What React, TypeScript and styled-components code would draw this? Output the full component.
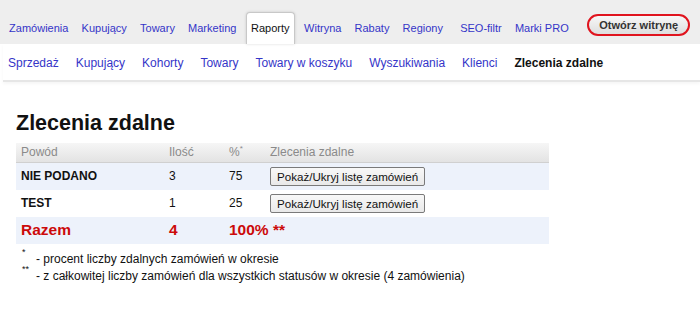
import styled, { createGlobalStyle } from "styled-components";

const GlobalStyle = createGlobalStyle`
  html, body {
    margin: 0;
    padding: 0;
    background: #ffffff;
    font-family: "Liberation Sans", Arial, sans-serif;
  }
`;

const TopBar = styled.div`
  height: 44px;
  box-sizing: border-box;
  background: #eeeeee;
  display: flex;
  align-items: flex-end;
  padding-left: 2.5px;
  white-space: nowrap;
`;

const TopItem = styled.a<{ $active?: boolean; $wide?: boolean }>`
  flex-shrink: 0;
  height: 32px;
  box-sizing: border-box;
  display: flex;
  align-items: center;
  padding: 0 ${(p) => (p.$active ? "4px" : "5.6px")} 2px;
  margin: 0 ${(p) => (p.$active ? "3px" : "0")};
  margin-left: ${(p) => (p.$wide ? "4px" : undefined)};
  font-size: 11px;
  color: ${(p) => (p.$active ? "#111" : "#3535c8")};
  background: ${(p) => (p.$active ? "#fff" : "transparent")};
  border: ${(p) => (p.$active ? "1px solid #c8c8c8" : "1px solid transparent")};
  border-bottom: none;
  border-radius: 4px 4px 0 0;
  box-shadow: ${(p) => (p.$active ? "0 0 3px rgba(0,0,0,0.15)" : "none")};
  cursor: pointer;
`;

const OpenButton = styled.button`
  flex-shrink: 0;
  align-self: center;
  margin: 5px 0 0 12px;
  height: 22px;
  padding: 0 10px;
  border: 2px solid #e0141e;
  border-radius: 11px;
  background: linear-gradient(#f7f7f7, #dedede);
  color: #333;
  font-family: "Liberation Sans", Arial, sans-serif;
  font-size: 11px;
  font-weight: bold;
  white-space: nowrap;
  cursor: pointer;
`;

const SubNav = styled.div`
  height: 38px;
  box-sizing: border-box;
  display: flex;
  align-items: center;
  gap: 17px;
  padding: 1px 0 0 5px;
  margin-left: 3px;
  white-space: nowrap;
  border-bottom: 2px solid #e6e6e6;
  box-shadow: 0 2px 3px rgba(0, 0, 0, 0.04);
`;

const SubItem = styled.a<{ $active?: boolean }>`
  flex-shrink: 0;
  font-size: 12px;
  color: ${(p) => (p.$active ? "#111" : "#3535c8")};
  font-weight: ${(p) => (p.$active ? "bold" : "normal")};
  cursor: pointer;
`;

const Main = styled.div`
  padding: 28px 16px 0 16px;
`;

const Title = styled.h1`
  margin: 0 0 7px 0;
  font-size: 21.5px;
  line-height: 26px;
  font-weight: bold;
  color: #111;
`;

const Table = styled.table`
  width: 533px;
  border-collapse: collapse;
  font-size: 12px;
  color: #111;
`;

const HeadCell = styled.th<{ $w?: number }>`
  text-align: left;
  font-weight: normal;
  color: #8a8a8a;
  height: 19px;
  padding: 0 5px;
  width: ${(p) => (p.$w ? `${p.$w}px` : "auto")};
  background: linear-gradient(#f6f6f6, #e3e3e3);
  border-bottom: 1px solid #d0d0d0;
  box-sizing: border-box;
`;

const Sup = styled.sup`
  font-size: 8px;
  vertical-align: 5px;
  line-height: 0;
`;

const Row = styled.tr<{ $shade?: boolean }>`
  background: ${(p) => (p.$shade ? "#edf2fb" : "#fff")};
`;

const Cell = styled.td<{ $bold?: boolean; $total?: boolean }>`
  height: 27px;
  padding: 0 5px;
  font-weight: ${(p) => (p.$bold || p.$total ? "bold" : "normal")};
  font-size: ${(p) => (p.$total ? "15.5px" : "12px")};
  color: ${(p) => (p.$total ? "#cc0a0a" : "#111")};
`;

const ToggleButton = styled.button`
  height: 19px;
  padding: 0 6px;
  font-family: "Liberation Sans", Arial, sans-serif;
  font-size: 11.6px;
  color: #111;
  background: linear-gradient(#f8f8f8, #e9e9e9);
  border: 1px solid #7a7a7a;
  border-radius: 2px;
  white-space: nowrap;
  cursor: pointer;
`;

const Notes = styled.div`
  margin-top: 7px;
  padding-left: 6px;
  font-size: 12px;
  color: #111;
  line-height: 17px;
`;

const Note = styled.div`
  display: flex;
  align-items: flex-start;
`;

const NoteMark = styled.span`
  font-size: 9px;
  line-height: 9px;
  width: 14px;
  margin-top: -3px;
`;

const topItems = [
  "Zamówienia",
  "Kupujący",
  "Towary",
  "Marketing",
  "Raporty",
  "Witryna",
  "Rabaty",
  "Regiony",
  "SEO-filtr",
  "Marki PRO",
];

const subItems = [
  "Sprzedaż",
  "Kupujący",
  "Kohorty",
  "Towary",
  "Towary w koszyku",
  "Wyszukiwania",
  "Klienci",
  "Zlecenia zdalne",
];

const rows = [
  { reason: "NIE PODANO", count: 3, pct: 75 },
  { reason: "TEST", count: 1, pct: 25 },
];

export default function App() {
  return (
    <>
      <GlobalStyle />
      <TopBar>
        {topItems.map((item) => (
          <TopItem
            key={item}
            $active={item === "Raporty"}
            $wide={item === "SEO-filtr"}
          >
            {item}
          </TopItem>
        ))}
        <OpenButton>Otwórz witrynę</OpenButton>
      </TopBar>
      <SubNav>
        {subItems.map((item) => (
          <SubItem key={item} $active={item === "Zlecenia zdalne"}>
            {item}
          </SubItem>
        ))}
      </SubNav>
      <Main>
        <Title>Zlecenia zdalne</Title>
        <Table>
          <thead>
            <tr>
              <HeadCell $w={148}>Powód</HeadCell>
              <HeadCell $w={60}>Ilość</HeadCell>
              <HeadCell $w={41}>
                %<Sup>*</Sup>
              </HeadCell>
              <HeadCell>Zlecenia zdalne</HeadCell>
            </tr>
          </thead>
          <tbody>
            {rows.map((r, i) => (
              <Row key={r.reason} $shade={i % 2 === 0}>
                <Cell $bold>{r.reason}</Cell>
                <Cell>{r.count}</Cell>
                <Cell>{r.pct}</Cell>
                <Cell>
                  <ToggleButton>Pokaż/Ukryj listę zamówień</ToggleButton>
                </Cell>
              </Row>
            ))}
            <Row $shade>
              <Cell $total>Razem</Cell>
              <Cell $total>4</Cell>
              <Cell $total colSpan={2}>
                100% **
              </Cell>
            </Row>
          </tbody>
        </Table>
        <Notes>
          <Note>
            <NoteMark>*</NoteMark>
            <span>- procent liczby zdalnych zamówień w okresie</span>
          </Note>
          <Note>
            <NoteMark>**</NoteMark>
            <span>
              - z całkowitej liczby zamówień dla wszystkich statusów w okresie (4
              zamówienia)
            </span>
          </Note>
        </Notes>
      </Main>
    </>
  );
}
